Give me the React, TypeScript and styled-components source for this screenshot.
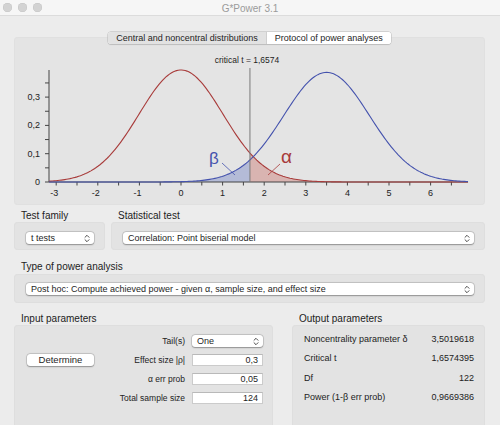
import React from "react";
import styled, { createGlobalStyle } from "styled-components";

const GlobalStyle = createGlobalStyle`
  html, body {
    margin: 0;
    padding: 0;
    background: #ececec;
    overflow: hidden;
  }
  body {
    font-family: "Liberation Sans", Arial, Helvetica, sans-serif;
    color: #242424;
  }
`;

// chart geometry, in coordinates of the chart panel
const SX = 41.6;
const SY = 283;
const X0 = 167;
const Y0 = 145;
const T_MIN = -3.173;
const T_MAX = 6.9;
const T_CRIT = 1.6574;

const npdf = (t: number, m: number, s: number) =>
  Math.exp(-0.5 * ((t - m) / s) ** 2) / (s * Math.sqrt(2 * Math.PI));
const central = (t: number) => npdf(t, 0, 1.008);
const noncentral = (t: number) => npdf(t, 3.5, 1.03);
const tx = (t: number) => X0 + t * SX;
const dy = (d: number) => Y0 - d * SY;

function curve(f: (t: number) => number, a: number, b: number) {
  const pts: string[] = [];
  const n = 240;
  for (let i = 0; i <= n; i++) {
    const t = a + ((b - a) * i) / n;
    pts.push(`${tx(t).toFixed(2)},${dy(f(t)).toFixed(2)}`);
  }
  return pts;
}

function areaPath(f: (t: number) => number, a: number, b: number) {
  const pts = curve(f, a, b);
  return `M${tx(a)},${Y0} L${pts.join(" L")} L${tx(b)},${Y0} Z`;
}

const Window = styled.div`
  width: 500px;
  height: 425px;
  overflow: hidden;
  display: flex;
  flex-direction: column;
`;

const TitleBar = styled.div`
  height: 15px;
  flex: none;
  background: #f6f6f6;
  border-bottom: 1px solid #dcdcdc;
  display: grid;
  grid-template-columns: 1fr auto 1fr;
  align-items: center;
`;

const Lights = styled.div`
  display: flex;
  gap: 6px;
  padding-left: 3px;
`;

const Light = styled.span`
  width: 9px;
  height: 9px;
  border-radius: 50%;
  background: #d3d3d3;
  box-shadow: inset 0 0 0 0.5px #c4c4c4;
`;

const Title = styled.div`
  font-size: 10px;
  color: #9b9b9b;
  padding-top: 1px;
`;

const Main = styled.div`
  padding: 0 15px 0 14px;
  display: flex;
  flex-direction: column;
`;

const TabsRow = styled.div`
  margin-top: 16px;
  margin-bottom: -7px;
  display: flex;
  justify-content: center;
  position: relative;
  z-index: 1;
`;

const Tabs = styled.div`
  display: flex;
  height: 12px;
  border-radius: 3px;
  box-shadow: 0 0 0 0.5px #b9b9b9, 0 0.5px 1px rgba(0, 0, 0, 0.15);
  overflow: hidden;
  background: #fff;
`;

const Tab = styled.div<{ $active?: boolean }>`
  font-size: 9px;
  line-height: 12px;
  padding: 0 8px;
  color: #1e1e1e;
  background: ${(p) => (p.$active ? "#e2e2e2" : "#fff")};
  border-right: ${(p) => (p.$active ? "1px solid #cfcfcf" : "none")};
`;

const ChartPanel = styled.div`
  height: 168px;
  background: #e4e4e4;
  border-radius: 4px;
  box-shadow: inset 0 0 0 1px #e0e0e0;
`;

const SectionLabel = styled.div`
  font-size: 10px;
  line-height: 12px;
  padding-left: 7px;
  color: #222;
`;

const TopGrid = styled.div`
  margin-top: 5px;
  display: grid;
  grid-template-columns: 91px 1fr;
  column-gap: 6px;
`;

const Column = styled.div`
  display: flex;
  flex-direction: column;
`;

const Box = styled.div<{ $height?: number }>`
  height: ${(p) => p.$height ?? 28}px;
  background: #e3e3e3;
  border-radius: 4px;
  box-shadow: inset 0 0 0 1px #dedede;
  box-sizing: border-box;
`;

const SelectBox = styled(Box)<{ $padTop?: number }>`
  padding: ${(p) => p.$padTop ?? 10}px 11px 0 12px;
`;

const Select = styled.div`
  height: 12px;
  background: #fff;
  border-radius: 3px;
  box-shadow: 0 0 0 0.5px rgba(0, 0, 0, 0.18), 0 0.5px 1.5px rgba(0, 0, 0, 0.3);
  display: flex;
  align-items: center;
  justify-content: space-between;
  padding: 0 4px 0 5px;
  font-size: 9px;
  color: #1e1e1e;
  white-space: nowrap;
`;

const Chevron = () => (
  <svg width="6" height="9" viewBox="0 0 6 9">
    <path
      d="M1 3.3 L3 1.3 L5 3.3 M1 5.7 L3 7.7 L5 5.7"
      fill="none"
      stroke="#3a3a3a"
      strokeWidth="0.9"
      strokeLinecap="round"
      strokeLinejoin="round"
    />
  </svg>
);

const PowerLabel = styled(SectionLabel)`
  margin-top: 11px;
  margin-bottom: 1px;
`;

const BottomGrid = styled.div`
  margin-top: 10px;
  display: grid;
  grid-template-columns: 259px 1fr;
  column-gap: 19px;
`;

const InputBox = styled(Box)`
  padding: 10px 10px 0 13px;
  display: grid;
  grid-template-columns: 67px 1fr 71px;
  grid-auto-rows: 12px;
  column-gap: 7px;
  row-gap: 7px;
  align-items: center;
`;

const ParamLabel = styled.div`
  grid-column: 2;
  font-size: 8.5px;
  text-align: right;
  color: #222;
  white-space: nowrap;
`;

const Field = styled.div`
  grid-column: 3;
  height: 12px;
  box-sizing: border-box;
  background: #fff;
  border: 1px solid #cbcbcb;
  border-top-color: #b9b9b9;
  font-size: 9px;
  line-height: 10px;
  text-align: right;
  padding-right: 4px;
  color: #1e1e1e;
`;

const Button = styled.div`
  grid-column: 1;
  grid-row: 2;
  height: 12px;
  background: #fff;
  border-radius: 3px;
  box-shadow: 0 0 0 0.5px rgba(0, 0, 0, 0.18), 0 0.5px 1.5px rgba(0, 0, 0, 0.3);
  font-size: 9.5px;
  line-height: 12px;
  text-align: center;
  color: #1e1e1e;
`;

const OutputBox = styled(Box)`
  padding: 4px 11px 0 12px;
  display: grid;
  grid-auto-rows: 19.5px;
`;

const OutRow = styled.div`
  display: flex;
  align-items: center;
  justify-content: space-between;
  font-size: 9px;
  color: #222;
`;

const inputRows: [string, string][] = [
  ["Effect size |ρ|", "0,3"],
  ["α err prob", "0,05"],
  ["Total sample size", "124"],
];

const outputRows: [string, string][] = [
  ["Noncentrality parameter δ", "3,5019618"],
  ["Critical t", "1,6574395"],
  ["Df", "122"],
  ["Power (1-β err prob)", "0,9669386"],
];

const RED = "#a83b3a";
const BLUE = "#4452ad";

const Chart = () => {
  const xTicks: number[] = [];
  for (let t = -3; t <= 6.5; t += 0.5) xTicks.push(t);
  const yTicks: number[] = [];
  for (let v = 0; v <= 0.351; v += 0.05) yTicks.push(v);
  const xc = tx(T_CRIT);

  return (
    <svg width="470" height="168" viewBox="0 0 470 168">
      <path d={areaPath(noncentral, T_MIN, T_CRIT)} fill="#b4bbd7" />
      <path d={areaPath(central, T_CRIT, T_MAX)} fill="#d9b4b1" />

      <line x1={35} y1={33} x2={35} y2={Y0} stroke="#444" strokeWidth="1" />
      <line x1={35} y1={Y0} x2={tx(T_MAX)} y2={Y0} stroke="#444" strokeWidth="1" />
      {yTicks.map((v) => (
        <line key={v} x1={31} x2={35} y1={dy(v)} y2={dy(v)} stroke="#444" strokeWidth="1" />
      ))}
      {[0, 0.1, 0.2, 0.3].map((v, i) => (
        <text key={v} x={26} y={dy(v) + 3} fontSize="9" textAnchor="end" fill="#222">
          {i === 0 ? "0" : `0,${i}`}
        </text>
      ))}
      {xTicks.map((t) => (
        <line key={t} x1={tx(t)} x2={tx(t)} y1={Y0} y2={Y0 + 3.5} stroke="#444" strokeWidth="1" />
      ))}
      {xTicks
        .filter((t) => Number.isInteger(t))
        .map((t) => (
          <text key={t} x={tx(t) - (t < 0 ? 2 : 0)} y={159} fontSize="9" textAnchor="middle" fill="#222">
            {t}
          </text>
        ))}

      <polyline points={curve(central, T_MIN, T_MAX).join(" ")} fill="none" stroke={RED} strokeWidth="1.1" />
      <polyline points={curve(noncentral, T_MIN, T_MAX).join(" ")} fill="none" stroke={BLUE} strokeWidth="1.1" />

      <line x1={xc} x2={xc} y1={31} y2={Y0} stroke="#7a7a7a" strokeWidth="1" />
      <text x={233} y={26} fontSize="8.5" textAnchor="middle" fill="#1e1e1e" fontWeight="500">
        critical t = 1,6574
      </text>

      <text x={195} y={127} fontSize="17" fill={BLUE}>
        β
      </text>
      <line x1={208} y1={126} x2={221} y2={138} stroke={BLUE} strokeWidth="0.8" />
      <text x={267} y={126} fontSize="19" fill={RED}>
        α
      </text>
      <line x1={266} y1={127} x2={254} y2={138} stroke={RED} strokeWidth="0.8" />
    </svg>
  );
};

export default function App() {
  return (
    <>
      <GlobalStyle />
      <Window>
        <TitleBar>
          <Lights>
            <Light />
            <Light />
            <Light />
          </Lights>
          <Title>G*Power 3.1</Title>
          <div />
        </TitleBar>
        <Main>
          <TabsRow>
            <Tabs>
              <Tab $active>Central and noncentral distributions</Tab>
              <Tab>Protocol of power analyses</Tab>
            </Tabs>
          </TabsRow>
          <ChartPanel>
            <Chart />
          </ChartPanel>

          <TopGrid>
            <Column>
              <SectionLabel>Test family</SectionLabel>
              <SelectBox>
                <Select>
                  <span>t tests</span>
                  <Chevron />
                </Select>
              </SelectBox>
            </Column>
            <Column>
              <SectionLabel>Statistical test</SectionLabel>
              <SelectBox>
                <Select>
                  <span>Correlation: Point biserial model</span>
                  <Chevron />
                </Select>
              </SelectBox>
            </Column>
          </TopGrid>

          <PowerLabel>Type of power analysis</PowerLabel>
          <SelectBox $height={29} $padTop={9}>
            <Select>
              <span>Post hoc: Compute achieved power - given α, sample size, and effect size</span>
              <Chevron />
            </Select>
          </SelectBox>

          <BottomGrid>
            <Column>
              <SectionLabel>Input parameters</SectionLabel>
              <InputBox $height={110}>
                <ParamLabel>Tail(s)</ParamLabel>
                <Select>
                  <span>One</span>
                  <Chevron />
                </Select>
                <Button>Determine</Button>
                {inputRows.map(([label, value]) => (
                  <React.Fragment key={label}>
                    <ParamLabel>{label}</ParamLabel>
                    <Field>{value}</Field>
                  </React.Fragment>
                ))}
              </InputBox>
            </Column>
            <Column>
              <SectionLabel>Output parameters</SectionLabel>
              <OutputBox $height={110}>
                {outputRows.map(([label, value]) => (
                  <OutRow key={label}>
                    <span>{label}</span>
                    <span>{value}</span>
                  </OutRow>
                ))}
              </OutputBox>
            </Column>
          </BottomGrid>
        </Main>
      </Window>
    </>
  );
}
